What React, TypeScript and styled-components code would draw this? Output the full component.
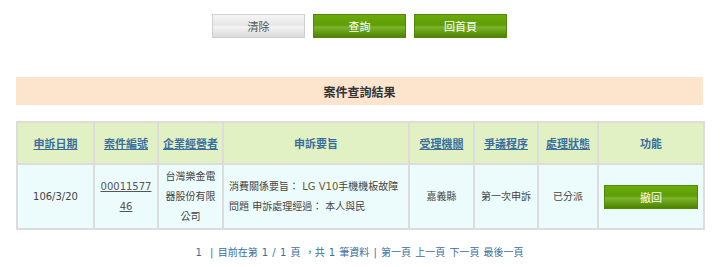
import * as React from 'react';
import styled, { createGlobalStyle, css } from 'styled-components';

const GlobalStyle = createGlobalStyle`
  body {
    margin: 0;
    background: #fff;
    font-family: "DejaVu Sans", Verdana, "Noto Sans CJK TC", sans-serif;
    color: #444;
  }
`;

const Page = styled.div`
  width: 720px;
  padding: 14px 17px 0 16px;
  box-sizing: border-box;
`;

const ButtonBar = styled.div`
  display: flex;
  justify-content: center;
  gap: 8px;
`;

const Button = styled.button<{ $green?: boolean; $wide?: boolean }>`
  width: ${(p) => (p.$wide ? '94px' : '93px')};
  height: 24px;
  padding: 0;
  font-family: "Noto Sans CJK TC", sans-serif;
  font-size: 11px;
  cursor: pointer;
  border: 1px solid #cfcfcf;
  color: #555;
  background: linear-gradient(#f6f6f6 0%, #e6e6e6 45%, #f4f4f4 55%, #d9d9d9 100%);
  ${(p) => p.$green && css`
    border-color: #4e8a06;
    color: #fff;
    background: linear-gradient(#6cab0b 0%, #5e9d04 45%, #7cb42a 55%, #4b8300 100%);
  `}
`;

const TitleBand = styled.div`
  margin-top: 39px;
  height: 28px;
  background: #fde4cd;
  display: flex;
  align-items: center;
  justify-content: center;
  font-family: "Noto Sans CJK TC", sans-serif;
  font-size: 12px;
  font-weight: bold;
  color: #333;
`;

const Table = styled.table`
  margin-top: 16px;
  width: 100%;
  border-collapse: collapse;
  border: 2px solid #dcdcdc;
  table-layout: fixed;
`;

const Th = styled.th<{ $w: number }>`
  width: ${(p) => p.$w - 2}px;
  height: 40px;
  padding: 0;
  background: #e2f1c4;
  border: 2px solid #dcdcdc;
  font-family: "Noto Sans CJK TC", sans-serif;
  font-size: 11px;
  font-weight: bold;
  color: #3a6e9e;
  text-align: center;
`;

const HeadLink = styled.a`
  color: #3a6e9e;
  text-decoration: underline;
`;

const Td = styled.td<{ $left?: boolean }>`
  height: 63px;
  padding: 0 5px;
  background: #ecfcfd;
  border: 2px solid #dcdcdc;
  font-family: "DejaVu Sans", "Noto Sans CJK TC", sans-serif;
  font-size: 10px;
  line-height: 20px;
  color: #444;
  text-align: ${(p) => (p.$left ? 'left' : 'center')};
  word-break: break-all;
`;

const CaseLink = styled.a`
  color: #555;
  text-decoration: underline;
`;

const Latin = styled.span`
  color: #6b5a2e;
`;

const Pager = styled.div`
  margin-top: 14px;
  text-align: center;
  font-family: "DejaVu Sans", "Noto Sans CJK TC", sans-serif;
  font-size: 10px;
  color: #3a6e9e;
  word-spacing: 1px;
`;

const columns: { label: string; w: number; link: boolean }[] = [
  { label: '申訴日期', w: 77, link: true },
  { label: '案件編號', w: 64, link: true },
  { label: '企業經營者', w: 65, link: true },
  { label: '申訴要旨', w: 186, link: false },
  { label: '受理機關', w: 65, link: true },
  { label: '爭議程序', w: 64, link: true },
  { label: '處理狀態', w: 60, link: true },
  { label: '功能', w: 106, link: false },
];

export default function App() {
  return (
    <>
      <GlobalStyle />
      <Page>
        <ButtonBar>
          <Button>清除</Button>
          <Button $green>查詢</Button>
          <Button $green>回首頁</Button>
        </ButtonBar>

        <TitleBand>案件查詢結果</TitleBand>

        <Table>
          <thead>
            <tr>
              {columns.map((c) => (
                <Th key={c.label} $w={c.w}>
                  {c.link ? <HeadLink>{c.label}</HeadLink> : c.label}
                </Th>
              ))}
            </tr>
          </thead>
          <tbody>
            <tr>
              <Td>106/3/20</Td>
              <Td><CaseLink>0001157746</CaseLink></Td>
              <Td>台灣樂金電器股份有限公司</Td>
              <Td $left>
                消費關係要旨： <Latin>LG V10</Latin>手機機板故障問題 申訴處理經過： 本人與民
              </Td>
              <Td>嘉義縣</Td>
              <Td>第一次申訴</Td>
              <Td>已分派</Td>
              <Td><Button $green $wide>撤回</Button></Td>
            </tr>
          </tbody>
        </Table>

        <Pager>
          1 &nbsp;| 目前在第 1 / 1 頁 ，共 1 筆資料 | 第一頁 上一頁 下一頁 最後一頁
        </Pager>
      </Page>
    </>
  );
}
